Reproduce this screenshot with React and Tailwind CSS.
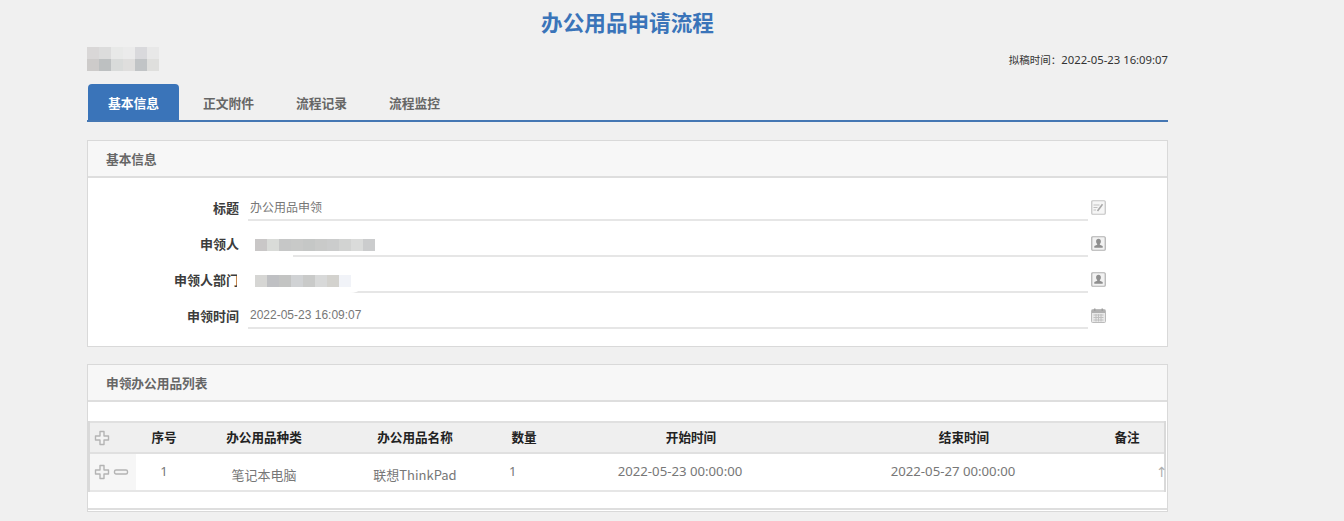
import React from 'react';

const CJK = 'font-["Noto_Sans_CJK_SC","Liberation_Sans",sans-serif]';

const tabs = ['基本信息', '正文附件', '流程记录', '流程监控'];

const EditIcon = () => (
    <svg width="15" height="15" viewBox="0 0 15 15" fill="none">
        <rect x="0.75" y="0.75" width="13.5" height="13.5" rx="1" fill="#f6f6f6" stroke="#c4c4c4" strokeWidth="1.2" />
        <path d="M2.5 5h6M2.5 7.5h4M2.5 10h2.5" stroke="#c0c0c0" strokeWidth="1" />
        <path d="M6.5 11 11.5 4.2" stroke="#a8a8a8" strokeWidth="1.6" />
    </svg>
);

const UserIcon = () => (
    <svg width="15" height="15" viewBox="0 0 15 15" fill="none">
        <rect x="0.75" y="0.75" width="13.5" height="13.5" rx="1" fill="#f2f2f2" stroke="#b0b0b0" strokeWidth="1.2" />
        <path d="M7.5 2.8c1.5 0 2.4 1.1 2.4 2.6 0 1.1-.5 2-1.1 2.5v.9l2.9 1.3v1.7H3.3v-1.7l2.9-1.3v-.9c-.6-.5-1.1-1.4-1.1-2.5 0-1.5.9-2.6 2.4-2.6Z" fill="#8f8f8f" />
    </svg>
);

const CalendarIcon = () => (
    <svg width="15" height="15" viewBox="0 0 15 15" fill="none">
        <rect x="0.5" y="1.5" width="14" height="13" rx="1" fill="#e9e9e9" stroke="#bbb" />
        <rect x="1" y="2" width="13" height="3" fill="#b0b0b0" />
        <rect x="3" y="0.5" width="1.5" height="2.5" fill="#a0a0a0" />
        <rect x="10.5" y="0.5" width="1.5" height="2.5" fill="#a0a0a0" />
        <path d="M2.5 7h10M2.5 9.5h10M2.5 12h10M5 6v7.5M7.5 6v7.5M10 6v7.5" stroke="#c0c0c0" strokeWidth="1" />
    </svg>
);

const PlusIcon = () => (
    <svg width="16" height="16" viewBox="0 0 16 16" fill="none">
        <path d="M6 1.5h4v4.5h4.5v4H10v4.5H6V10H1.5V6H6Z" fill="#f4f4f4" stroke="#b4b4b4" strokeWidth="1.4" strokeLinejoin="round" />
    </svg>
);

const MinusIcon = () => (
    <svg width="16" height="16" viewBox="0 0 16 16" fill="none">
        <rect x="1.5" y="6" width="13" height="4" rx="1.5" fill="#f4f4f4" stroke="#b4b4b4" strokeWidth="1.4" />
    </svg>
);

const Cells = ({ colors }) => (
    <div className="flex">
        {colors.map((c, i) => (
            <div key={i} className="w-3 h-3" style={{ backgroundColor: c }} />
        ))}
    </div>
);

const FormRow = ({ label, icon, children }) => (
    <div className="flex h-9">
        <label className="w-[151px] text-right text-[13px] font-bold text-[#3c3c3c] leading-[45px] shrink-0">{label}</label>
        <div className="relative w-[840px] ml-[9px] border-b-2 border-[#e6e6e6] flex items-center text-xs text-[#777] pl-0.5 pt-[10px] shrink-0">
            {children}
        </div>
        <div className="ml-[3px] pt-[15px]">{icon}</div>
    </div>
);

const PanelHead = ({ title }) => (
    <div className="h-[37px] bg-[#f7f7f7] border-b-2 border-[#dedede] pl-[18px] text-[12.7px] font-bold text-[#666] leading-[36px]">
        {title}
    </div>
);

const gridCols = 'grid grid-cols-[46px_56px_144px_158px_60px_274px_272px_54px_1fr]';
const numFont = "font-['Noto_Sans',sans-serif]";

export default function App() {
    return (
        <div className={`${CJK} bg-[#f0f0f0] h-[521px] w-[1344px] overflow-hidden`}>
            <div className="w-[1081px] ml-[87px]">
                <h1 className="h-[47px] text-center text-[21.6px] font-bold text-[#3a74b9] leading-[43px]">办公用品申请流程</h1>

                <div className="flex justify-between h-[37px]">
                    <div>
                        <Cells colors={['#d9d7d7', '#dcdcdc', '#e8e9e8', '#ebebeb', '#d9d9dc', '#e8e8e8']} />
                        <Cells colors={['#cdcbca', '#bdc0c1', '#d9dbda', '#dfdedd', '#c1c4c6', '#dfdfdd']} />
                    </div>
                    <div className="text-[10.5px] text-[#333] leading-[26px]">
                        拟稿时间：<span className={`${numFont} text-[11.3px]`}>2022-05-23 16:09:07</span>
                    </div>
                </div>

                <div className="flex h-[38px] border-b-2 border-[#4577b3] pl-px">
                    {tabs.map((t, i) => (
                        <div
                            key={t}
                            className={`h-9 text-[12.8px] font-bold leading-[37px] text-center ${
                                i === 0 ? 'w-[91px] mr-[3px] bg-[#3a74b9] text-white rounded-t' : 'w-[93px] text-[#666]'
                            }`}
                        >
                            {t}
                        </div>
                    ))}
                </div>

                <section className="mt-[18px] h-[207px] bg-white border border-[#d9d9d9]">
                    <PanelHead title="基本信息" />
                    <div className="pt-[7px]">
                        <FormRow label="标题" icon={<EditIcon />}>办公用品申领</FormRow>
                        <FormRow label="申领人" icon={<UserIcon />}>
                            <div className="absolute -left-[10px] top-0 w-[155px] h-8 bg-white rounded-full" />
                            <div className="absolute left-0 top-0 w-[45px] h-9 bg-white" />
                            <div className="absolute left-[7px] top-[18px]">
                                <Cells colors={['#c9c7c7', '#d9dbd8', '#c6c7c7', '#c8c9c8', '#c5c7c6', '#c9cac9', '#cbcccc', '#d2d3d2', '#dadbda', '#cbcccd']} />
                            </div>
                        </FormRow>
                        <FormRow label="申领人部门" icon={<UserIcon />}>
                            <div className="absolute -left-[11px] top-0 w-[131px] h-9 bg-white rounded-r-full" />
                            <div className="absolute left-[7px] top-[18px]">
                                <Cells colors={['#d6d6d4', '#bfc0c3', '#c3c4c3', '#d0d2d4', '#c9cac9', '#d8d9d9', '#d3d2ce', '#f1f3f8']} />
                            </div>
                        </FormRow>
                        <FormRow label="申领时间" icon={<CalendarIcon />}>
                            <span className="font-['Liberation_Sans',sans-serif]">2022-05-23 16:09:07</span>
                        </FormRow>
                    </div>
                </section>

                <section className="mt-[17px] h-[148px] bg-white border border-[#d9d9d9]">
                    <PanelHead title="申领办公用品列表" />
                    <div className="mt-[19px] border-l-2 border-r-2 border-[#d9d9d9] mr-px">
                        <div className={`${gridCols} h-[33px] bg-[#efefef] border-y-2 border-[#e0e0e0] items-center text-center text-[12.6px] font-bold text-[#222]`}>
                            <div className="flex pl-[4px]"><PlusIcon /></div>
                            <div>序号</div>
                            <div>办公用品种类</div>
                            <div>办公用品名称</div>
                            <div>数量</div>
                            <div>开始时间</div>
                            <div>结束时间</div>
                            <div>备注</div>
                            <div />
                        </div>
                        <div className={`${gridCols} h-[38px] border-b-2 border-[#e6e6e6] items-center text-center text-[13px] text-[#777]`}>
                            <div className="h-full bg-[#f6f6f6] flex items-center gap-[3px] pl-[4px] pb-[1px]"><PlusIcon /><MinusIcon /></div>
                            <div className={numFont}>1</div>
                            <div className="pt-[5px]">笔记本电脑</div>
                            <div className="pt-[5px]">联想ThinkPad</div>
                            <div className={`text-left pl-[15px] ${numFont}`}>1</div>
                            <div className={`pr-[22px] text-[13.2px] ${numFont}`}>2022-05-23 00:00:00</div>
                            <div className={`pr-[22px] text-[13.2px] ${numFont}`}>2022-05-27 00:00:00</div>
                            <div />
                            <div className="text-[#b0b0b0] text-sm pl-[2px] font-['DejaVu_Sans',sans-serif]">↑</div>
                        </div>
                    </div>
                    <div className="mt-4 border-b-2 border-[#dedede]" />
                </section>
            </div>
        </div>
    );
}
